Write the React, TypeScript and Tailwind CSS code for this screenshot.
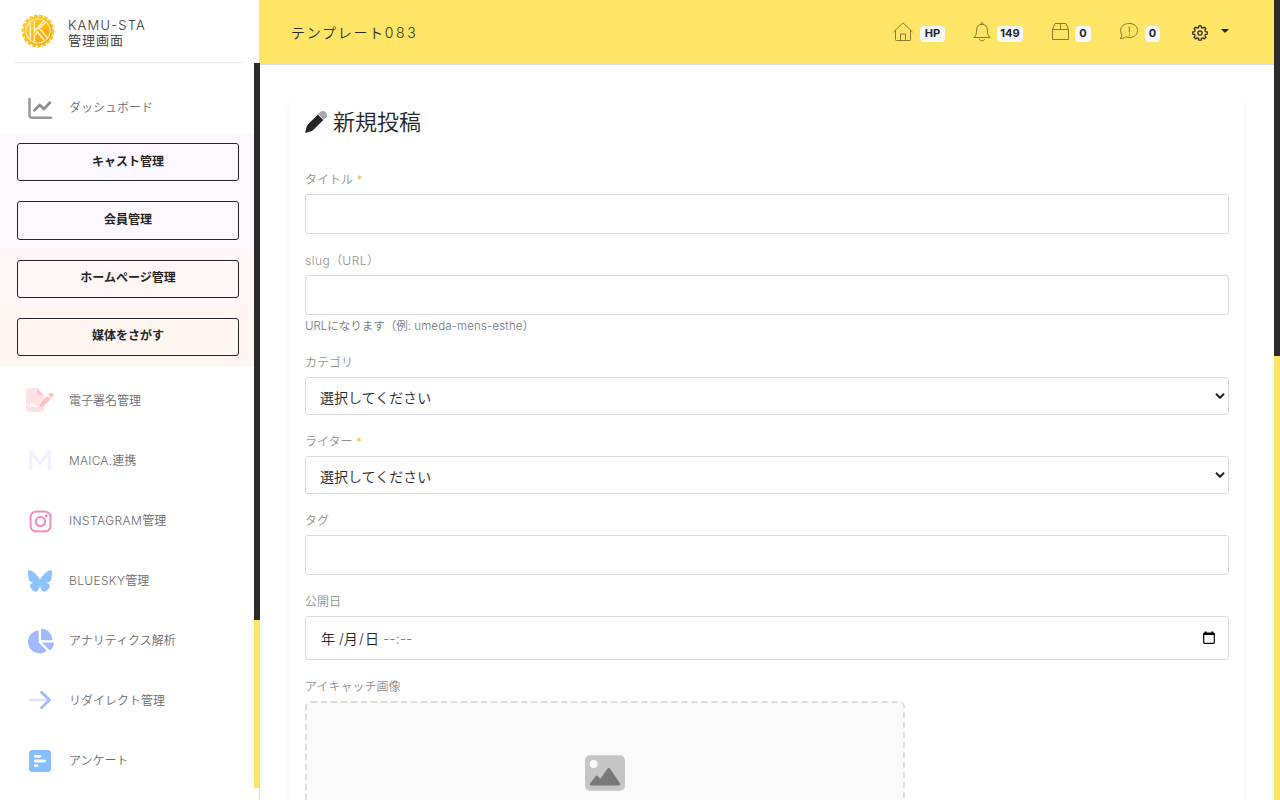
import type { ReactNode } from "react";
import { FaInstagram, FaBluesky } from "react-icons/fa6";
import { FaChartPie } from "react-icons/fa";

const Logo = () => (
  <svg className="size-[34px] shrink-0" viewBox="0 0 34 34" fill="none">
    <defs>
      <linearGradient id="gold" x1="0" y1="0" x2="1" y2="1">
        <stop offset="0" stopColor="#ffd52e" />
        <stop offset="1" stopColor="#ff9c00" />
      </linearGradient>
    </defs>
    <circle cx="17" cy="17" r="14.5" fill="url(#gold)" />
    <circle
      cx="17"
      cy="17"
      r="15.3"
      stroke="#fdc52c"
      strokeWidth="2.2"
      strokeDasharray="3.8 1.4"
    />
    <circle cx="17" cy="17" r="12" stroke="#fff0b8" strokeWidth="1.2" />
    <path
      d="M9.300 9v16M13.300 7v10.500L22.500 7M13.300 27v-5.500l3.200-3.500 7 8.500M17 15.500l8-7.500M19.500 15.500l7 8.500"
      stroke="#fff3c4"
      strokeWidth="1.600"
    />
  </svg>
);

const ChartLineIcon = () => (
  <svg
    className="mb-px size-[26px]"
    viewBox="0 0 26 26"
    fill="none"
    strokeLinecap="round"
    strokeLinejoin="round"
  >
    <path
      d="M2.500 4v16.500a2.300 2.300 0 0 0 2.300 2.300H24"
      stroke="#9a9a9a"
      strokeWidth="2.500"
    />
    <path
      d="m7.500 15.200 5.200-5.200 4.200 4 6-6.200"
      stroke="#8f8f8f"
      strokeWidth="2.700"
    />
  </svg>
);

const SignatureIcon = () => (
  <svg className="mb-0.5 h-6 w-7" viewBox="0 0 28 24">
    <path
      d="M3 0h8v6a1.500 1.500 0 0 0 1.500 1.500H18v2l-4.500 4.500-1 5 5-1 .5-.5V21a3 3 0 0 1-3 3H3a3 3 0 0 1-3-3V3a3 3 0 0 1 3-3Z"
      fill="#ffe1e1"
    />
    <path d="M11 0v6a1.500 1.500 0 0 0 1.500 1.500H18Z" fill="#ffc4c4" />
    <path
      d="m3.800 18.800 1.700-4 1.200 3.700 1.500-1.700.8 1.700h3"
      fill="none"
      stroke="#fff"
      strokeWidth="1.300"
      strokeLinejoin="round"
    />
    <path d="m21 7.700 3.600 3.600-7.300 7.300-4.400 1 1-4.400Z" fill="#ffc0c0" />
    <path
      d="m22.200 6.700 1.200-1.100a2.200 2.200 0 0 1 3.400 3.200l-1.200 1.300Z"
      fill="#ffc0c0"
    />
  </svg>
);

const MaicaIcon = () => (
  <svg className="mb-0.5 size-6" viewBox="0 0 24 24" fill="none">
    <path
      d="M2.700 21V3l9.300 12.500L21.300 3v18"
      stroke="#f2f0ff"
      strokeWidth="3.200"
      strokeLinecap="round"
      strokeLinejoin="round"
    />
  </svg>
);

const ArrowIcon = () => (
  <svg
    className="mb-0.5 size-6"
    viewBox="0 0 24 24"
    fill="none"
    strokeWidth="2.700"
    strokeLinecap="round"
    strokeLinejoin="round"
  >
    <path d="M2.500 12h18" stroke="#d9e3ff" />
    <path d="m13.500 4.300 8 7.700-8 7.700" stroke="#a1baff" />
  </svg>
);

const SurveyIcon = () => (
  <svg className="size-[22px]" viewBox="0 0 22 22">
    <rect width="22" height="22" rx="3.2" fill="#86beff" />
    <path
      d="M6.300 6.300H11M6.300 11h9.200M6.300 15.600h1.700"
      stroke="#fff"
      strokeWidth="2.800"
      strokeLinecap="round"
    />
  </svg>
);

const PencilIcon = () => (
  <svg className="size-[22px] shrink-0" viewBox="0 0 22 22">
    <path
      d="M12.800 3.400 18.300 8.900 8 19.200a4 4 0 0 1-1.800 1L0 22l1.700-6.300a4 4 0 0 1 1-1.900Z"
      fill="#242424"
    />
    <path
      d="m13.200 3 2.300-2a3.300 3.300 0 0 1 4.700 0l.8.800a3.300 3.300 0 0 1 0 4.700l-2.300 2Z"
      fill="#a7a7a7"
    />
  </svg>
);

const ImageIcon = () => (
  <svg className="h-9 w-10" viewBox="0 0 40 36">
    <rect y=".3" width="40" height="35.400" rx="5" fill="#c5c5c5" />
    <circle cx="8.700" cy="9" r="3.900" fill="#fafafa" />
    <path
      d="M6 30.500a1.300 1.300 0 0 1-1-2l5.500-7a1.700 1.700 0 0 1 2.700 0l2.200 2.500 7-10.300a1.700 1.700 0 0 1 2.800 0l9.700 14.600c.6 1 0 2.200-1 2.200Z"
      fill="#787878"
    />
  </svg>
);

const HomeIcon = () => (
  <svg className="size-5" viewBox="0 0 20 20">
    <path d="m.5 10 9.500-9.200L19.500 10M2.500 8.200v9.300a1 1 0 0 0 1 1h13a1 1 0 0 0 1-1V8.200M7.500 18.500v-6.500h5v6.500" />
  </svg>
);

const BellIcon = () => (
  <svg className="h-5 w-[18px]" viewBox="0 0 18 20">
    <path d="M8 2.200V1.500a1 1 0 0 1 2 0v.7M1 15.500c2-2 2.600-3.300 2.600-7.500 0-3.500 2.200-5.700 5.400-5.700s5.400 2.200 5.400 5.700c0 4.200.6 5.500 2.600 7.500ZM6.500 17c.4 1.300 1.200 1.800 2.500 1.800s2.100-.5 2.500-1.800" />
  </svg>
);

const BoxIcon = () => (
  <svg className="h-5 w-[18px]" viewBox="0 0 18 20">
    <path d="M1.500 7.500v10h16v-10ZM1.500 7.500 4 1.500h11l2.500 6M9.500 1.500v6" />
  </svg>
);

const ChatIcon = () => (
  <svg className="size-5" viewBox="0 0 20 20">
    <path d="M10.300 1.500c5 0 8.200 3 8.200 7s-3.200 7-8.200 7c-1.400 0-2.600-.2-3.700-.7-1 .8-2.800 1.700-5.500 1.700 1.300-1 1.700-2.200 1.700-3.600-.7-1.200-1.200-2.600-1.200-4.400 0-4 3.600-7 8.700-7ZM10.300 4.500v6M10.300 12v1.500" />
  </svg>
);

// eight teeth, each one two outer points between two inner ones
const gearPoints = Array.from({ length: 8 })
  .flatMap((_, i) =>
    [
      [-15, 5.600],
      [-9, 7.300],
      [9, 7.300],
      [15, 5.600],
    ].map(([offset, r]) => {
      const angle = ((i * 45 + offset) * Math.PI) / 180;
      return `${8 + r * Math.cos(angle)},${8 + r * Math.sin(angle)}`;
    })
  )
  .join(" ");

const GearIcon = () => (
  <svg
    className="mt-0.5 mr-[13px] size-4 stroke-[#242424] stroke-[1.2]"
    viewBox="0 0 16 16"
    strokeLinejoin="round"
  >
    <polygon points={gearPoints} />
    <circle cx="8" cy="8" r="2.100" />
  </svg>
);

const Badge = ({ children }: { children: ReactNode }) => (
  <span className="flex h-4 items-center justify-center rounded bg-[#f8f9fa] text-[11px] font-bold text-[#212529]">
    {children}
  </span>
);

const Chevron = () => (
  <svg
    className="mr-[3px] h-[6px] w-[10px]"
    viewBox="0 0 10 6"
    fill="none"
    stroke="#242424"
    strokeWidth="2"
  >
    <path d="m1 .8 4 4 4-4" />
  </svg>
);

const NavItem = ({ icon, children }: { icon: ReactNode; children: ReactNode }) => (
  <a href="#" className="flex h-[60px] items-center text-xs font-[350] text-[#6c6c6c]">
    <span className="ml-6 flex w-8 justify-center">{icon}</span>
    <span className="ml-[13px] whitespace-nowrap">{children}</span>
  </a>
);

const NavButton = ({ children }: { children: ReactNode }) => (
  <a
    href="#"
    className="flex h-[38.250px] items-center justify-center rounded-[3px] border border-[#242424] pb-px text-xs font-bold text-[#242424]"
  >
    {children}
  </a>
);

const Field = ({
  label,
  required,
  children,
}: {
  label: ReactNode;
  required?: boolean;
  children: ReactNode;
}) => (
  <div className="mb-[17px]">
    <label className="mb-[5px] block h-[19px] pt-px text-xs leading-[18px] font-[350] text-[#919191]">
      {label}
      {required && <span className="text-[#e3b650]"> *</span>}
    </label>
    {children}
  </div>
);

const TextBox = () => (
  <div className="h-10 rounded-[3px] border border-[#dadada] bg-white" />
);

const SelectBox = () => (
  <div className="flex h-[38px] items-center justify-between rounded-[3px] border border-[#dadada] bg-white pl-3.5 text-sm font-[350] text-[#242424]">
    <span className="pt-[3px]">選択してください</span>
    <Chevron />
  </div>
);

const Sidebar = () => (
  <aside className="flex w-[260px] shrink-0 flex-col border-r border-[#dddddd] bg-white">
    <div className="mx-[15px] flex h-[63px] shrink-0 items-center border-b border-[#ebebeb] pl-1.5">
      <Logo />
      <div className="ml-[13px] pt-0.5 text-[13px] leading-[15px] font-[350] tracking-[1px] text-[#333]">
        <div className="pt-px tracking-[1.200px]">KAMU-STA</div>
        <div>管理画面</div>
      </div>
    </div>
    <div className="-mr-px flex h-[725px]">
      <nav className="flex-1 overflow-hidden">
        <div className="h-[70px] pt-[15px]">
          <NavItem icon={<ChartLineIcon />}>ダッシュボード</NavItem>
        </div>
        <div className="bg-[#fdf7ff] py-2.5 pr-[15px] pl-[17px]">
          <NavButton>キャスト管理</NavButton>
        </div>
        <div className="bg-[#fdf7ff] py-2.5 pr-[15px] pl-[17px]">
          <NavButton>会員管理</NavButton>
        </div>
        <div className="bg-[#fff6f6] py-2.5 pr-[15px] pl-[17px]">
          <NavButton>ホームページ管理</NavButton>
        </div>
        <div className="bg-[#fff6f2] py-2.5 pr-[15px] pl-[17px]">
          <NavButton>媒体をさがす</NavButton>
        </div>
        <div className="pt-[5px]">
          <NavItem icon={<SignatureIcon />}>電子署名管理</NavItem>
          <NavItem icon={<MaicaIcon />}>
            <span className="tracking-[0.200px]">MAICA.</span>連携
          </NavItem>
          <NavItem icon={<FaInstagram className="size-[25px] text-[#f08abf]" />}>
            <span className="tracking-[0.400px]">INSTAGRAM</span>管理
          </NavItem>
          <NavItem icon={<FaBluesky className="size-6 text-[#8cc3ff]" />}>
            <span className="tracking-[0.350px]">BLUESKY</span>管理
          </NavItem>
          <NavItem icon={<FaChartPie className="ml-px size-[26px] text-[#a1baff]" />}>
            アナリティクス解析
          </NavItem>
          <NavItem icon={<ArrowIcon />}>リダイレクト管理</NavItem>
          <NavItem icon={<SurveyIcon />}>アンケート</NavItem>
        </div>
      </nav>
      <div className="w-1.5 bg-[#ffe565]">
        <div className="h-[557px] bg-[#2b2b2b]" />
      </div>
    </div>
  </aside>
);

const Header = () => (
  <header className="-ml-px flex h-[65px] shrink-0 items-center justify-between border-b border-[#dddddd] bg-[#ffe565] pr-[45px] pl-8">
    <div className="pt-0.5 text-sm font-[350] tracking-[1.700px] text-[#2b2b2b]">
      テンプレート<span className="tracking-[2.600px]">083</span>
    </div>
    <div className="flex items-center fill-none stroke-[#6b5f25] stroke-[0.8]">
      <div className="mr-7 flex items-center gap-[7px]">
        <HomeIcon />
        <div className="w-[25px] pt-[3px]">
          <Badge>HP</Badge>
        </div>
      </div>
      <div className="mr-7 flex items-center gap-[6px]">
        <BellIcon />
        <div className="w-[26px] pt-[3px]">
          <Badge>149</Badge>
        </div>
      </div>
      <div className="mr-7 flex items-center gap-[6px]">
        <BoxIcon />
        <div className="w-4 pt-[3px]">
          <Badge>0</Badge>
        </div>
      </div>
      <div className="mr-8 flex items-center gap-[6px]">
        <ChatIcon />
        <div className="w-[15px] pt-[3px]">
          <Badge>0</Badge>
        </div>
      </div>
      <GearIcon />
      <div className="mb-0.5 border-x-4 border-t-4 border-x-transparent border-t-[#242424]" />
    </div>
  </header>
);

const PostForm = () => (
  <section className="mx-[30px] mt-[30px] flex-1 px-[15px] shadow-[0_6px_8px_rgba(0,0,0,0.04)]">
    <h1 className="flex h-[54px] items-center gap-1.5 text-[22px] font-[350] text-[#242424]">
      <PencilIcon />
      新規投稿
    </h1>
    <div className="mt-[21px]">
      <Field label="タイトル" required>
        <TextBox />
      </Field>
      <Field
        label={
          <>
            <span className="tracking-[0.500px]">slug</span>（
            <span className="tracking-[0.500px]">URL</span>）
          </>
        }
      >
        <TextBox />
        <p className="h-[21px] pt-px text-[11.500px] leading-[21px] font-[350] text-[#6c757d]">
          URLになります（例: <span className="tracking-[0.150px]">umeda-mens-esthe</span>）
        </p>
      </Field>
      <Field label="カテゴリ">
        <SelectBox />
      </Field>
      <Field label="ライター" required>
        <SelectBox />
      </Field>
      <Field label="タグ">
        <TextBox />
      </Field>
      <Field label="公開日">
        <div className="flex h-11 items-center justify-between rounded-[3px] border border-[#dadada] bg-white pr-[13px] pl-[15px] text-sm font-[350] text-[#242424]">
          <span className="pt-0.5">
            年 /<span className="tracking-[1.200px]">月/</span>日{" "}
            <span className="text-[#757575]">--:--</span>
          </span>
          <svg className="mb-0.5 h-[13px] w-3" viewBox="0 0 12 13" fill="none" stroke="#000">
            <path
              d="M1.500 2h9a.8.8 0 0 1 .8.8v8.700a.8.8 0 0 1-.8.8h-9a.8.8 0 0 1-.8-.8V2.800a.8.800 0 0 1 .8-.8Z"
              strokeWidth="1.200"
            />
            <path d="M.7 3h10.600M2.700 .5V2M9.300 .5V2" strokeWidth="1.800" />
          </svg>
        </div>
      </Field>
      <Field label="アイキャッチ画像">
        <div className="flex h-[300px] w-[600px] justify-center rounded-md border-2 border-dashed border-[#dcdcdc] bg-[#fafafa] pt-[52px]">
          <ImageIcon />
        </div>
      </Field>
    </div>
  </section>
);

export default function App() {
  return (
    <div className="flex h-[800px] w-[1280px] overflow-hidden bg-white font-['Inter','Noto_Sans_CJK_JP',sans-serif]">
      <Sidebar />
      <main className="flex min-w-0 flex-1 flex-col overflow-hidden">
        <Header />
        <PostForm />
      </main>
      <div className="w-1.5 bg-[#ffe565]">
        <div className="h-[356px] bg-[#2b2b2b]" />
      </div>
    </div>
  );
}
